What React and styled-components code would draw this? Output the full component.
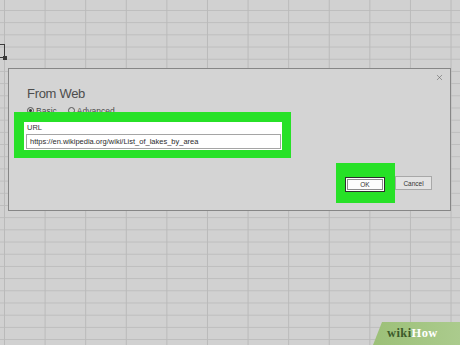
import React from 'react';
import styled, { createGlobalStyle } from 'styled-components';
import { X } from 'lucide-react';

const GlobalStyle = createGlobalStyle`
	html, body {
		margin: 0;
		padding: 0;
		background: #d1d1d1;
	}
	* {
		box-sizing: border-box;
	}
`;

const Sheet = styled.main`
	position: relative;
	width: 460px;
	height: 345px;
	overflow: hidden;
	padding: 68px 0 0 8px;
	font-family: 'Liberation Sans', Arial, sans-serif;
	background-color: #d1d1d1;
	background-image:
		linear-gradient(to right, #bababa 1px, transparent 1px),
		linear-gradient(to bottom, #bdbdbd 1px, transparent 1px);
	background-size: 40.6px 100%, 100% 12.2px;
	background-position: 4px 0, 0 10px;
`;

const ActiveCell = styled.div`
	position: absolute;
	left: -6px;
	top: 44px;
	width: 11px;
	height: 14px;
	border: 1.5px solid #3a3a3a;
	&::after {
		content: '';
		position: absolute;
		right: -3px;
		bottom: -3px;
		width: 4px;
		height: 4px;
		background: #3a3a3a;
	}
`;

const Dialog = styled.section`
	width: 443px;
	background: #d4d4d4;
	border: 1px solid #868686;
	display: flex;
	flex-direction: column;
	padding-bottom: 7px;
`;

const TopBar = styled.div`
	height: 16px;
	display: flex;
	justify-content: flex-end;
	align-items: center;
	padding-right: 6px;
	color: #5a5a5a;
`;

const Title = styled.h2`
	margin: 2px 0 0 18px;
	font-size: 13px;
	line-height: 13px;
	font-weight: 400;
	letter-spacing: -0.3px;
	color: #4d4d4d;
`;

const RadioRow = styled.div`
	display: flex;
	align-items: center;
	gap: 11px;
	margin: 6px 0 0 18px;
	height: 9px;
	font-size: 8.5px;
	color: #4a4a4a;
`;

const RadioOption = styled.label`
	display: flex;
	align-items: center;
	gap: 2px;
`;

const RadioDot = styled.span`
	width: 7px;
	height: 7px;
	border-radius: 50%;
	border: 1px solid #555;
	display: inline-flex;
	align-items: center;
	justify-content: center;
	&::after {
		content: '';
		width: 3px;
		height: 3px;
		border-radius: 50%;
		background: ${(p) => (p.checked ? '#333' : 'transparent')};
	}
`;

const Highlight = styled.div`
	position: relative;
	margin: -3px 0 0 5px;
	width: 277px;
	padding: 10px 9px 8px 10px;
	background: #27e127;
`;

const Field = styled.div`
	background: #fff;
	padding: 1px 1px 1px 2px;
	display: flex;
	flex-direction: column;
	gap: 2px;
`;

const FieldLabel = styled.span`
	font-size: 7.5px;
	line-height: 9px;
	color: #333;
	padding-left: 1px;
`;

const UrlInput = styled.div`
	height: 15px;
	border: 1px solid #a5a5a5;
	padding: 0 3px;
	display: flex;
	align-items: center;
	font-size: 7.5px;
	color: #2b2b2b;
	white-space: nowrap;
`;

const Footer = styled.div`
	display: flex;
	justify-content: flex-end;
	align-items: center;
	margin-top: 5px;
	padding-right: 18px;
`;

const ButtonGlow = styled.div`
	padding: 10px 10px 11px 9px;
	background: #27e127;
`;

const Button = styled.button`
	width: ${(p) => (p.primary ? '40px' : '37px')};
	height: ${(p) => (p.primary ? '15px' : '14px')};
	padding: 0;
	font-family: inherit;
	font-size: 6.5px;
	color: #333;
	background: ${(p) => (p.primary ? '#fdfdfd' : '#e3e3e3')};
	border: 1px solid ${(p) => (p.primary ? '#2e2e2e' : '#a8a8a8')};
	box-shadow: ${(p) => (p.primary ? 'inset 0 0 0 1px #fff, inset 0 0 0 2px #8c8c8c' : 'none')};
`;

const Watermark = styled.div`
	position: absolute;
	right: 0;
	bottom: 0;
	width: 87px;
	height: 23px;
	padding: 4px 4px 0 14px;
	background: linear-gradient(90deg, #9cc078, #abcb8d);
	clip-path: polygon(9px 0, 100% 0, 100% 100%, 0 100%);
	font-family: 'Liberation Serif', 'Times New Roman', serif;
	font-weight: 700;
	font-size: 12.5px;
	line-height: 14px;
	letter-spacing: 0.4px;
`;

const WikiPart = styled.span`
	color: ${(p) => (p.light ? '#ffffff' : '#3c5a2a')};
`;

export default function App() {
	return (
		<>
			<GlobalStyle />
			<Sheet>
				<ActiveCell />
				<Dialog>
					<TopBar>
						<X size={9} strokeWidth={1.4} />
					</TopBar>
					<Title>From Web</Title>
					<RadioRow>
						<RadioOption>
							<RadioDot checked />
							Basic
						</RadioOption>
						<RadioOption>
							<RadioDot />
							Advanced
						</RadioOption>
					</RadioRow>
					<Highlight>
						<Field>
							<FieldLabel>URL</FieldLabel>
							<UrlInput>https://en.wikipedia.org/wiki/List_of_lakes_by_area</UrlInput>
						</Field>
					</Highlight>
					<Footer>
						<ButtonGlow>
							<Button primary>OK</Button>
						</ButtonGlow>
						<Button>Cancel</Button>
					</Footer>
				</Dialog>
				<Watermark>
					<WikiPart>wiki</WikiPart>
					<WikiPart light>How</WikiPart>
				</Watermark>
			</Sheet>
		</>
	);
}
